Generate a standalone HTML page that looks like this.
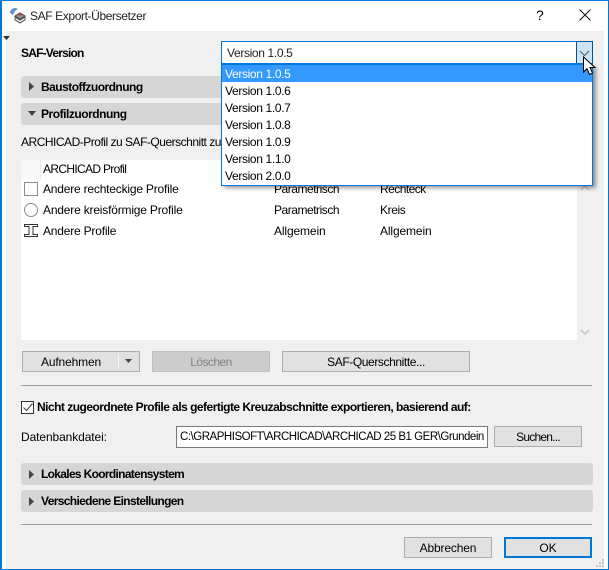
<!DOCTYPE html>
<html><head><meta charset="utf-8"><style>
html,body{margin:0;padding:0}
body{width:609px;height:570px;position:relative;overflow:hidden;background:#fff;font:12px "Liberation Sans",sans-serif;color:#000}
div,span,svg{position:absolute;box-sizing:border-box}
.t{white-space:nowrap;line-height:16px;height:16px}
.b{font-weight:bold}
.bar{left:21px;width:572px;background:#d6d6d6;border-radius:3px}
.btn{background:#e1e1e1;border:1px solid #adadad;text-align:center;line-height:20px;white-space:nowrap}
.it{left:225px;letter-spacing:-.35px}
.sep{left:21px;width:571px;height:1px;background:#a0a0a0}
</style></head><body>
<div style="left:0;top:0;width:609px;height:570px;border:1px solid #0078d7;border-left-width:2px"></div>
<div style="left:6px;top:31px;width:598px;height:538px;background:#f0f0f0"></div>

<svg style="left:9px;top:7px" width="18" height="18" viewBox="0 0 18 18"><path d="M1 6a5 5 0 0 1 8-4l-3 2-2 4z" fill="#6c8fd0"/><path d="M6 9l5-3 5 3-5 3z" fill="#999" stroke="#444"/><path d="M6 10v3l5 3 5-3v-3l-5 3z" fill="#ddd" stroke="#555"/><path d="M9 8l3-2 1 2-2 1z" fill="#b44"/></svg>
<div class="t" style="left:30px;top:8px;color:#222;letter-spacing:-.38px">SAF Export-Übersetzer</div>
<div class="t" style="left:536px;top:7px;font-size:14px">?</div>
<svg style="left:579px;top:9px" width="12" height="12" viewBox="0 0 12 12"><path d="M.5.5l11 11M11.500.5l-11 11" stroke="#111" fill="none"/></svg>
<svg style="left:1px;top:35px" width="10" height="6"><path d="M2 1h7L5.500 5z" fill="#333"/></svg>

<div class="t b" style="left:21px;top:45px;letter-spacing:-.8px">SAF-Version</div>

<div class="bar" style="top:76px;height:22px"></div>
<svg style="left:29px;top:82px" width="6" height="10"><path d="M0 0l5 4.500L0 9z" fill="#444"/></svg>
<div class="t b" style="left:41px;top:79px;letter-spacing:-.53px">Baustoffzuordnung</div>
<div class="bar" style="top:103px;height:22px"></div>
<svg style="left:27px;top:111px" width="10" height="6"><path d="M1 0h8L5 5z" fill="#444"/></svg>
<div class="t b" style="left:41px;top:106px;letter-spacing:-.47px">Profilzuordnung</div>

<div class="t" style="left:21px;top:134px;letter-spacing:-.49px">ARCHICAD-Profil zu SAF-Querschnitt zu</div>

<div style="left:21px;top:160px;width:556px;height:180px;background:#fff"></div>
<div style="left:40px;top:160px;width:1px;height:19px;background:#ececec"></div>
<div style="left:21px;top:160px;width:19px;height:19px;background:#f8f8f8"></div>
<div class="t" style="left:43px;top:161px;letter-spacing:-.67px">ARCHICAD Profil</div>
<div class="t" style="left:43px;top:181px;letter-spacing:-.2px">Andere rechteckige Profile</div>
<div class="t" style="left:43px;top:202px;letter-spacing:-.19px">Andere kreisförmige Profile</div>
<div class="t" style="left:43px;top:223px;letter-spacing:-.2px">Andere Profile</div>
<div class="t" style="left:274px;top:181px;letter-spacing:-.47px">Parametrisch</div>
<div class="t" style="left:380px;top:181px;letter-spacing:-.55px">Rechteck</div>
<div class="t" style="left:274px;top:202px;letter-spacing:-.47px">Parametrisch</div>
<div class="t" style="left:380px;top:202px;letter-spacing:-.4px">Kreis</div>
<div class="t" style="left:274px;top:223px;letter-spacing:-.13px">Allgemein</div>
<div class="t" style="left:380px;top:223px;letter-spacing:-.13px">Allgemein</div>
<svg style="left:23px;top:181px" width="16" height="60" viewBox="0 0 16 60">
<rect x="1.500" y="1.500" width="13" height="13" fill="#fff" stroke="#8c8c8c"/>
<circle cx="8" cy="29" r="6.500" fill="#fff" stroke="#8c8c8c"/>
<path d="M1.500 43.500h13v2h-4.500v8h4.500v2h-13v-2H6v-8H1.500z" fill="#fff" stroke="#333"/>
</svg>
<svg style="left:580px;top:329px" width="10" height="7"><path d="M1 1l4 4 4-4" fill="none" stroke="#c0c0c0" stroke-width="1.500"/></svg>
<svg style="left:580px;top:185px" width="10" height="7"><path d="M1 5l4-4 4 4" fill="none" stroke="#c0c0c0" stroke-width="1.500"/></svg>

<div class="btn" style="left:22px;top:351px;width:118px;height:21px"><span class="t" style="left:18px;top:2px;letter-spacing:-.15px">Aufnehmen</span></div>
<div style="left:118px;top:354px;width:1px;height:15px;background:#f4f4f4"></div>
<svg style="left:124px;top:359px" width="9" height="5"><path d="M1 0h7L4.500 4z" fill="#444"/></svg>
<div class="btn" style="left:152px;top:351px;width:118px;height:21px;background:#ccc;border-color:#bfbfbf;color:#838383;letter-spacing:-.55px">Löschen</div>
<div class="btn" style="left:282px;top:351px;width:188px;height:21px;letter-spacing:-.4px">SAF-Querschnitte...</div>

<div class="sep" style="top:385px"></div>
<div style="left:21px;top:401px;width:13px;height:13px;border:1px solid #333;background:#fff"></div>
<svg style="left:23px;top:403px" width="10" height="9"><path d="M.5 4.500l3 3 6-7" fill="none" stroke="#444" stroke-width="1.100"/></svg>
<div class="t b" style="left:37px;top:399px;letter-spacing:-.52px">Nicht zugeordnete Profile als gefertigte Kreuzabschnitte exportieren, basierend auf:</div>
<div class="t" style="left:21px;top:429px;letter-spacing:-.1px">Datenbankdatei:</div>
<div style="left:176px;top:426px;width:312px;height:22px;background:#fff;border:1px solid #7a7a7a"></div>
<div class="t" style="left:180px;top:429px;width:305px;overflow:hidden;font-size:11.5px;letter-spacing:-.48px">C:\GRAPHISOFT\ARCHICAD\ARCHICAD 25 B1 GER\Grundein</div>
<div class="btn" style="left:494px;top:426px;width:88px;height:21px;letter-spacing:-.78px">Suchen...</div>

<div class="bar" style="top:463px;height:22px"></div>
<svg style="left:29px;top:470px" width="6" height="10"><path d="M0 0l5 4.500L0 9z" fill="#444"/></svg>
<div class="t b" style="left:41px;top:466px;letter-spacing:-.68px">Lokales Koordinatensystem</div>
<div class="bar" style="top:490px;height:22px"></div>
<svg style="left:29px;top:497px" width="6" height="10"><path d="M0 0l5 4.500L0 9z" fill="#444"/></svg>
<div class="t b" style="left:41px;top:493px;letter-spacing:-.65px">Verschiedene Einstellungen</div>
<div class="sep" style="top:524px"></div>
<div class="btn" style="left:404px;top:537px;width:88px;height:21px;letter-spacing:-.15px">Abbrechen</div>
<div class="btn" style="left:504px;top:537px;width:88px;height:21px;border:2px solid #0078d7;line-height:18px">OK</div>
<svg style="left:596px;top:559px" width="9" height="9"><path d="M6 0h2v2H6zM3 3h2v2H3zM6 3h2v2H6zM0 6h2v2H0zM3 6h2v2H3zM6 6h2v2H6z" fill="#c4c4c4"/></svg>

<div style="left:221px;top:64px;width:372px;height:121px;box-shadow:3px 3px 4px rgba(0,0,0,.4)"></div>
<div style="left:221px;top:41px;width:372px;height:23px;background:#fff;border:1px solid #0078d7"></div>
<div class="t" style="left:227px;top:45px;letter-spacing:-.35px;color:#222">Version 1.0.5</div>
<div style="left:576px;top:41px;width:17px;height:23px;background:#cce4f7;border:1px solid #005499"></div>
<svg style="left:579px;top:50px" width="11" height="7"><path d="M1 1l4.500 4.500L10 1" fill="none" stroke="#555"/></svg>
<div style="left:221px;top:63px;width:372px;height:123px;background:#fff;border:1px solid #0078d7;border-top-width:2px"></div>
<div style="left:222px;top:65px;width:370px;height:17px;background:#39f"></div>
<div class="t it" style="top:66px;color:#fff">Version 1.0.5</div>
<div class="t it" style="top:83px">Version 1.0.6</div>
<div class="t it" style="top:100px">Version 1.0.7</div>
<div class="t it" style="top:117px">Version 1.0.8</div>
<div class="t it" style="top:134px">Version 1.0.9</div>
<div class="t it" style="top:151px">Version 1.1.0</div>
<div class="t it" style="top:168px">Version 2.0.0</div>

<svg style="left:582px;top:56px" width="15" height="21" viewBox="0 0 15 21"><path d="M1.500 1v15l3.500-3.500 2.500 6 3-1.300-2.500-5.700h5z" fill="#fff" stroke="#000"/></svg>
</body></html>
